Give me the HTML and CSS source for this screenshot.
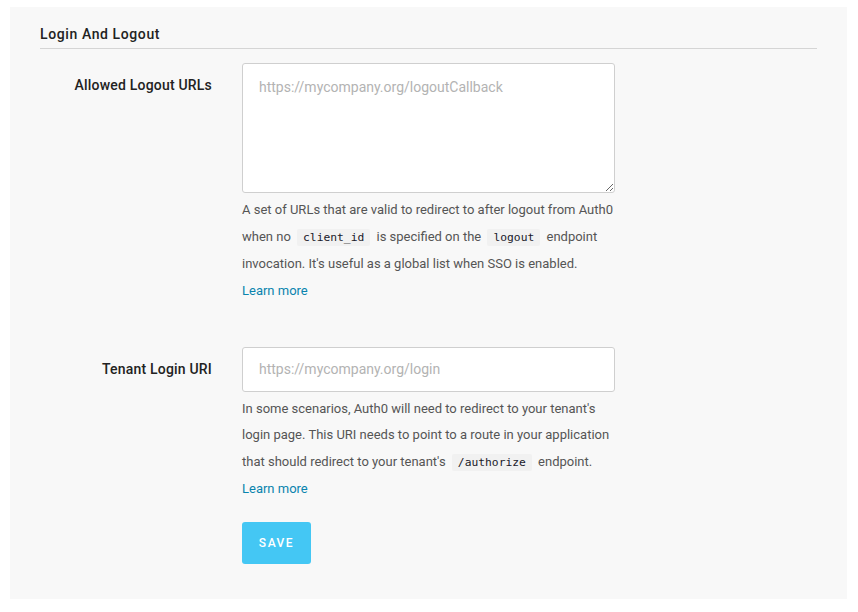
FILE: index.html
```html
<!DOCTYPE html>
<html>
<head>
<meta charset="utf-8">
<link rel="stylesheet" href="styles.css">
</head>
<body>
<div class="panel">
  <h2 class="section-title">Login And Logout</h2>
  <div class="row">
    <label class="label">Allowed Logout URLs</label>
    <div class="control">
      <textarea class="textarea" placeholder="https://mycompany.org/logoutCallback"></textarea>
      <p class="help">A set of URLs that are valid to redirect to after logout from Auth0 when no <code>client_id</code> is specified on the <code>logout</code> endpoint invocation. It's useful as a global list when SSO is enabled.</p>
      <a class="learn" href="#">Learn more</a>
    </div>
  </div>
  <div class="row row2">
    <label class="label">Tenant Login URI</label>
    <div class="control">
      <input class="input" type="text" placeholder="https://mycompany.org/login">
      <p class="help">In some scenarios, Auth0 will need to redirect to your tenant's login page. This URI needs to point to a route in your application that should redirect to your tenant's <code>/authorize</code> endpoint.</p>
      <a class="learn" href="#">Learn more</a>
      <div><button class="save">SAVE</button></div>
    </div>
  </div>
</div>
</body>
</html>
```

FILE: styles.css
```css
html, body { margin: 0; padding: 0; background: #fff; }
body { padding: 7px 11px 13px 10px; font-family: Roboto, "Noto Sans", sans-serif; color: #333; }
.panel {
  background: #f8f8f8;
  height: 592px;
  box-sizing: border-box;
  padding: 19px 30px 0 30px;
}
.section-title {
  margin: 0;
  font-size: 14px;
  font-weight: 500;
  color: #222;
  letter-spacing: 0.6px;
  padding-bottom: 5px;
  border-bottom: 1px solid #d5d5d5;
  line-height: 17px;
}
.row { display: flex; margin-top: 14px; }
.row2 { margin-top: 43px; }
.label {
  width: 172px;
  flex: none;
  text-align: right;
  font-size: 14px;
  font-weight: 500;
  letter-spacing: 0.2px;
  color: #222;
  padding-top: 14px;
  line-height: 17px;
  padding-right: 30px;
  box-sizing: content-box;
}
.control { width: 373px; }
.textarea, .input {
  display: block;
  width: 373px;
  box-sizing: border-box;
  border: 1px solid #cfcfcf;
  border-radius: 3px;
  background: #fff;
  font-family: Roboto, "Noto Sans", sans-serif;
  font-size: 14px;
  color: #333;
  padding: 14px 16px;
  margin: 0;
  outline: none;
}
.textarea { height: 130px; resize: vertical; line-height: 18px; }
.input { height: 45px; }
.textarea::placeholder, .input::placeholder { color: #b3b3b3; }
.help {
  margin: 4px 0 0 0;
  font-size: 13px;
  line-height: 26.5px;
  letter-spacing: 0;
  color: #555;
}
code {
  font-family: "DejaVu Sans Mono", "Liberation Mono", monospace;
  font-size: 11.3px;
  background: #f1f1f1;
  color: #1a1a2a;
  padding: 2px 6px;
  margin: 0 3px;
  border-radius: 2px;
  letter-spacing: 0;
}
.learn {
  display: block;
  font-size: 13px;
  line-height: 26px;
  color: #0a84ae;
  text-decoration: none;
}
.save {
  margin-top: 20px;
  width: 69px;
  height: 42px;
  background: #44c7f4;
  border: none;
  border-radius: 3px;
  color: #fff;
  font-family: Roboto, "Noto Sans", sans-serif;
  font-size: 12px;
  font-weight: 500;
  letter-spacing: 1.5px;
  padding: 0;
}
```
